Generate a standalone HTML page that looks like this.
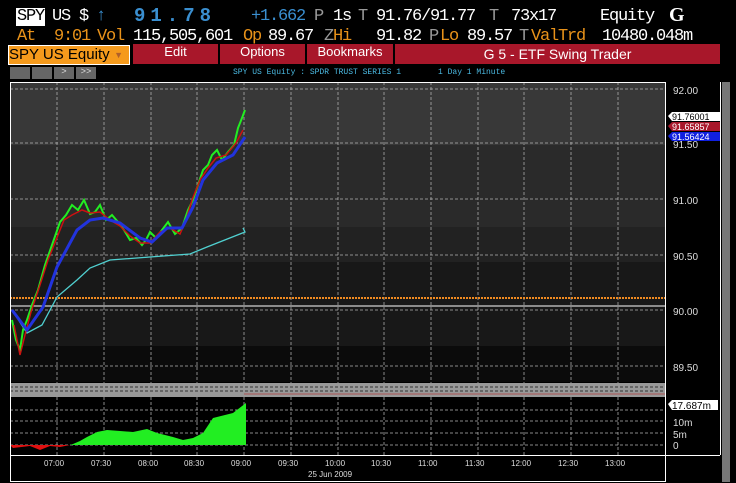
<!DOCTYPE html>
<html><head><meta charset="utf-8"><style>
body{margin:0;background:#000;width:736px;height:483px;overflow:hidden;position:relative;font-family:"Liberation Mono",monospace}
.a{position:absolute;white-space:nowrap}
.t{position:absolute;white-space:nowrap;font-size:17px;line-height:18px;color:#fff;letter-spacing:-1.2px}
.o{color:#e8921a}.g{color:#999}.b{color:#3a8fd0}
</style></head><body>
<span class="t" style="left:16px;top:8px;background:#fff;color:#000;padding:0 1px">SPY</span>
<span class="t" style="left:52px;top:8px">US $</span>
<span class="t b" style="left:96px;top:8px">↑</span>
<b class="t b" style="left:134px;top:7px;font-size:19px;line-height:18px;letter-spacing:5px">91.78</b>
<span class="t b" style="left:251px;top:8px">+1.662</span>
<span class="t g" style="left:314px;top:8px">P</span>
<span class="t" style="left:333px;top:8px">1s</span>
<span class="t g" style="left:358px;top:8px">T</span>
<span class="t" style="left:376px;top:8px">91.76/91.77</span>
<span class="t g" style="left:489px;top:8px">T</span>
<span class="t" style="left:511px;top:8px">73x17</span>
<span class="t" style="left:600px;top:8px">Equity</span>
<b class="t" style="left:669px;top:6px;font-family:'Liberation Serif',serif;font-size:20px;letter-spacing:0">G</b>
<span class="t o" style="left:17px;top:28px">At</span>
<span class="t o" style="left:54px;top:28px">9:01</span>
<span class="t o" style="left:97px;top:28px">Vol</span>
<span class="t" style="left:133px;top:28px">115,505,601</span>
<span class="t o" style="left:243px;top:28px">Op</span>
<span class="t" style="left:268px;top:28px">89.67</span>
<span class="t g" style="left:324px;top:28px">Z</span>
<span class="t o" style="left:333px;top:28px">Hi</span>
<span class="t" style="left:376px;top:28px">91.82</span>
<span class="t g" style="left:429px;top:28px">P</span>
<span class="t o" style="left:440px;top:28px">Lo</span>
<span class="t" style="left:467px;top:28px">89.57</span>
<span class="t g" style="left:519px;top:28px">T</span>
<span class="t o" style="left:531px;top:28px">ValTrd</span>
<span class="t" style="left:602px;top:28px">10480.048m</span>
<div class="a" style="left:8px;top:45px;width:120px;height:18px;background:#f59a1c;border:1px solid #fff;font:15px/18px 'Liberation Sans',sans-serif;color:#000">SPY US Equity<span style="position:absolute;right:6px;color:#b0602a;font-size:9px">▼</span></div>
<div class="a" style="left:133px;top:44px;width:85px;height:20px;background:#a8172a;color:#fff;font:13px/16px 'Liberation Sans',sans-serif;text-align:center">Edit</div>
<div class="a" style="left:220px;top:44px;width:85px;height:20px;background:#a8172a;color:#fff;font:13px/16px 'Liberation Sans',sans-serif;text-align:center">Options</div>
<div class="a" style="left:307px;top:44px;width:86px;height:20px;background:#a8172a;color:#fff;font:13px/16px 'Liberation Sans',sans-serif;text-align:center">Bookmarks</div>
<div class="a" style="left:395px;top:44px;width:325px;height:20px;background:#a8172a;color:#fff;font:14px/20px 'Liberation Sans',sans-serif;text-align:center">G 5 - ETF Swing Trader</div>
<div class="a" style="left:10px;top:67px;width:20px;height:12px;background:#666"></div>
<div class="a" style="left:32px;top:67px;width:20px;height:12px;background:#666"></div>
<div class="a" style="left:54px;top:67px;width:20px;height:12px;background:#666;color:#ddd;font-size:9px;text-align:center">&gt;</div>
<div class="a" style="left:76px;top:67px;width:20px;height:12px;background:#666;color:#ddd;font-size:9px;text-align:center">&gt;&gt;</div>
<div class="a" style="left:233px;top:67px;color:#4ab8e0;font-size:8px;line-height:12px">SPY US Equity : SPDR TRUST SERIES 1</div>
<div class="a" style="left:438px;top:67px;color:#4ab8e0;font-size:8px;line-height:12px">1 Day  1 Minute</div>
<div class="a" style="left:722px;top:82px;width:8px;height:400px;background:#777"></div>
<svg class="a" style="left:0;top:0" width="736" height="483">
<rect x="10" y="82" width="655" height="63" fill="#383838"/>
<rect x="10" y="145" width="655" height="82" fill="#2a2a2a"/>
<rect x="10" y="227" width="655" height="35" fill="#222"/>
<rect x="10" y="262" width="655" height="84" fill="#181818"/>
<rect x="10" y="346" width="655" height="36" fill="#0b0b0b"/>
<g stroke="#aaa" stroke-dasharray="3,2" stroke-width="1" opacity=".8">
<line x1="10" y1="89" x2="665" y2="89"/><line x1="10" y1="143" x2="665" y2="143"/><line x1="10" y1="199" x2="665" y2="199"/><line x1="10" y1="255" x2="665" y2="255"/><line x1="10" y1="310" x2="665" y2="310"/><line x1="10" y1="366" x2="665" y2="366"/>
<line x1="10" y1="410" x2="665" y2="410"/><line x1="10" y1="421" x2="665" y2="421"/><line x1="10" y1="433" x2="665" y2="433"/><line x1="10" y1="445" x2="665" y2="445"/>
</g>
<g stroke="#aaa" stroke-dasharray="3,2" opacity=".8">
<line x1="57" y1="82" x2="57" y2="455"/><line x1="104" y1="82" x2="104" y2="455"/><line x1="151" y1="82" x2="151" y2="455"/><line x1="197" y1="82" x2="197" y2="455"/><line x1="244" y1="82" x2="244" y2="455"/><line x1="291" y1="82" x2="291" y2="455"/><line x1="338" y1="82" x2="338" y2="455"/><line x1="384" y1="82" x2="384" y2="455"/><line x1="431" y1="82" x2="431" y2="455"/><line x1="478" y1="82" x2="478" y2="455"/><line x1="524" y1="82" x2="524" y2="455"/><line x1="571" y1="82" x2="571" y2="455"/><line x1="618" y1="82" x2="618" y2="455"/>
</g>
<rect x="10" y="383" width="655" height="14" fill="#999"/>
<line x1="10" y1="387" x2="665" y2="387" stroke="#333" stroke-dasharray="3,2"/>
<line x1="10" y1="391" x2="665" y2="391" stroke="#333" stroke-dasharray="3,2"/>
<line x1="244" y1="394" x2="665" y2="394" stroke="#a55"/>
<line x1="10" y1="298" x2="665" y2="298" stroke="#f08a20" stroke-width="2" stroke-dasharray="2,1"/>
<line x1="10" y1="306" x2="665" y2="306" stroke="#fff"/>
<polyline fill="none" stroke="#50d0d0" stroke-width="1.3" points="12,310 27,333 42,325 57,297 77,280 90,268 110,260 150,257 190,254 207,247 245,232 243,228"/>
<polyline fill="none" stroke="#22ee22" stroke-width="2" points="12,320 16,340 20,350 23,330 27,320 32,305 38,290 45,265 52,245 60,222 66,215 72,205 78,210 84,200 90,214 95,212 100,205 106,220 112,215 118,222 124,230 130,240 136,238 142,245 146,240 150,232 156,238 162,230 168,222 175,234 182,228 188,210 193,200 198,185 203,170 208,165 212,155 217,150 222,160 228,152 234,145 238,128 242,118 245,110"/>
<polyline fill="none" stroke="#cc1111" stroke-width="1.5" points="14,325 20,355 25,335 31,312 40,285 48,260 56,240 64,220 72,215 82,210 90,213 100,212 110,220 120,226 130,236 140,243 150,243 160,232 170,228 180,234 186,220 192,200 200,180 208,168 216,158 226,155 236,143 243,130"/>
<polyline fill="none" stroke="#2233dd" stroke-width="3" points="12,310 27,330 43,307 57,267 77,230 90,220 103,218 120,223 140,238 152,242 167,228 182,228 193,207 203,180 217,163 233,155 245,137"/>
<path d="M10,445 L13,448 L30,446 L40,450 L50,446 L60,447 L70,445 Z" fill="#e01010"/>
<path d="M70,445 L73,444 L80,441 L87,437 L97,432 L107,430 L120,431 L133,432 L147,429 L157,433 L173,437 L183,440 L193,438 L203,433 L213,418 L233,413 L246,403 L246,445 Z" fill="#22ee22"/>
<rect x="10.5" y="82.5" width="655" height="399" fill="none" stroke="#fff"/>
<line x1="10" y1="455.5" x2="665" y2="455.5" stroke="#fff"/>
<line x1="665" y1="455.5" x2="720" y2="455.5" stroke="#fff"/>
<line x1="720.5" y1="82" x2="720.5" y2="455" stroke="#fff"/>
<g fill="#ddd" font-family="Liberation Sans" font-size="8">
<text x="44" y="466">07:00</text><text x="91" y="466">07:30</text><text x="138" y="466">08:00</text><text x="184" y="466">08:30</text><text x="231" y="466">09:00</text><text x="278" y="466">09:30</text><text x="325" y="466">10:00</text><text x="371" y="466">10:30</text><text x="418" y="466">11:00</text><text x="465" y="466">11:30</text><text x="511" y="466">12:00</text><text x="558" y="466">12:30</text><text x="605" y="466">13:00</text><text x="308" y="477">25 Jun 2009</text>
</g>
<g fill="#ddd" font-family="Liberation Sans" font-size="10">
<text x="673" y="94">92.00</text><text x="673" y="148">91.50</text><text x="673" y="204">91.00</text><text x="673" y="260">90.50</text><text x="673" y="315">90.00</text><text x="673" y="371">89.50</text>
<text x="673" y="426">10m</text><text x="673" y="438">5m</text><text x="673" y="449">0</text>
</g>
<polygon points="668,116 672,112 720,112 720,121 672,121" fill="#fff"/><text x="672" y="120" font-family="Liberation Sans" font-size="9" fill="#000">91.76001</text>
<polygon points="668,126 672,122 720,122 720,131 672,131" fill="#a8172a"/><text x="672" y="130" font-family="Liberation Sans" font-size="9" fill="#fff">91.65857</text>
<polygon points="668,136 672,132 720,132 720,141 672,141" fill="#1020e0"/><text x="672" y="140" font-family="Liberation Sans" font-size="9" fill="#fff">91.56424</text>
<polygon points="668,404 672,400 718,400 718,410 672,410" fill="#fff"/><text x="672" y="409" font-family="Liberation Sans" font-size="10" fill="#000">17.687m</text>
</svg>
</body></html>
